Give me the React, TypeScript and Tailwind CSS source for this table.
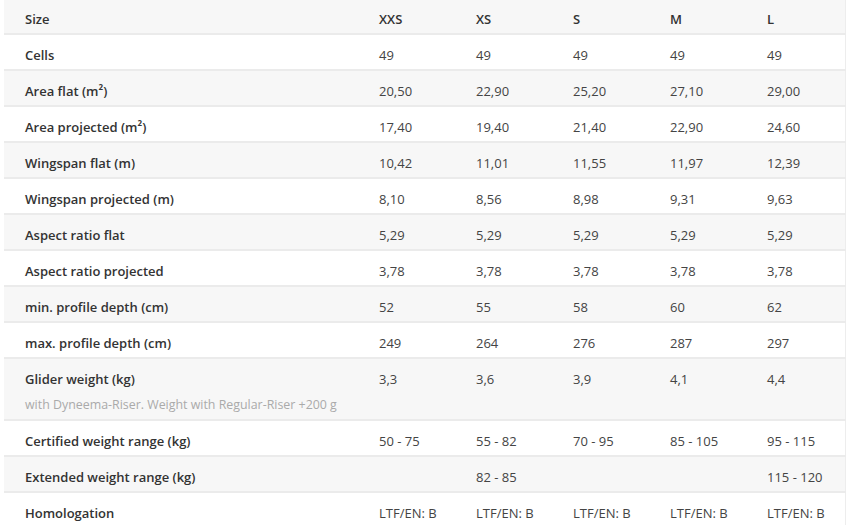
import React from "react";

const sizes = ["XXS", "XS", "S", "M", "L"];

type Row = { label: string; values: string[]; note?: string };

const rows: Row[] = [
  { label: "Cells", values: ["49", "49", "49", "49", "49"] },
  { label: "Area flat (m²)", values: ["20,50", "22,90", "25,20", "27,10", "29,00"] },
  { label: "Area projected (m²)", values: ["17,40", "19,40", "21,40", "22,90", "24,60"] },
  { label: "Wingspan flat (m)", values: ["10,42", "11,01", "11,55", "11,97", "12,39"] },
  { label: "Wingspan projected (m)", values: ["8,10", "8,56", "8,98", "9,31", "9,63"] },
  { label: "Aspect ratio flat", values: ["5,29", "5,29", "5,29", "5,29", "5,29"] },
  { label: "Aspect ratio projected", values: ["3,78", "3,78", "3,78", "3,78", "3,78"] },
  { label: "min. profile depth (cm)", values: ["52", "55", "58", "60", "62"] },
  { label: "max. profile depth (cm)", values: ["249", "264", "276", "287", "297"] },
  {
    label: "Glider weight (kg)",
    values: ["3,3", "3,6", "3,9", "4,1", "4,4"],
    note: "with Dyneema-Riser. Weight with Regular-Riser +200 g",
  },
  { label: "Certified weight range (kg)", values: ["50 - 75", "55 - 82", "70 - 95", "85 - 105", "95 - 115"] },
  { label: "Extended weight range (kg)", values: ["", "82 - 85", "", "", "115 - 120"] },
  { label: "Homologation", values: ["LTF/EN: B", "LTF/EN: B", "LTF/EN: B", "LTF/EN: B", "LTF/EN: B"] },
];

export default function App() {
  return (
    <div
      className="w-[850px] h-[525px] overflow-hidden bg-white pl-[4px] pr-[5px]"
      style={{ fontFamily: '"Open Sans", "Liberation Sans", sans-serif' }}
    >
      <table className="w-[841px] border-collapse table-fixed border-r border-[#ededed] text-[13px] leading-[18px]">
        <colgroup>
          <col className="w-[354px]" />
          <col className="w-[97px]" />
          <col className="w-[97px]" />
          <col className="w-[97px]" />
          <col className="w-[97px]" />
          <col className="w-[99px]" />
        </colgroup>
        <thead>
          <tr className="bg-[#f7f7f7] border-b-2 border-[#ebebeb]">
            <th className="h-[34px] px-[21px] pt-[5px] pb-[1px] text-left font-semibold text-[#333]">Size</th>
            {sizes.map((s) => (
              <th key={s} className="px-[21px] pt-[5px] pb-[1px] text-left font-semibold text-[#333]">
                {s}
              </th>
            ))}
          </tr>
        </thead>
        <tbody>
          {rows.map((r, i) => (
            <tr
              key={r.label}
              className={`${i % 2 === 1 ? "bg-[#f7f7f7]" : "bg-white"} border-b-2 border-[#ebebeb]`}
            >
              <td className="align-top px-[21px] pt-[11px] pb-[5px] font-semibold text-[#333] whitespace-nowrap">
                <div>{r.label}</div>
                {r.note && (
                  <div className="mt-[8px] text-[12.4px] font-normal text-[#aaaaaa] whitespace-nowrap">{r.note}</div>
                )}
              </td>
              {r.values.map((v, j) => (
                <td key={j} className="align-top px-[21px] pt-[11px] pb-[5px] text-[#444] whitespace-nowrap">
                  {v}
                </td>
              ))}
            </tr>
          ))}
        </tbody>
      </table>
    </div>
  );
}
